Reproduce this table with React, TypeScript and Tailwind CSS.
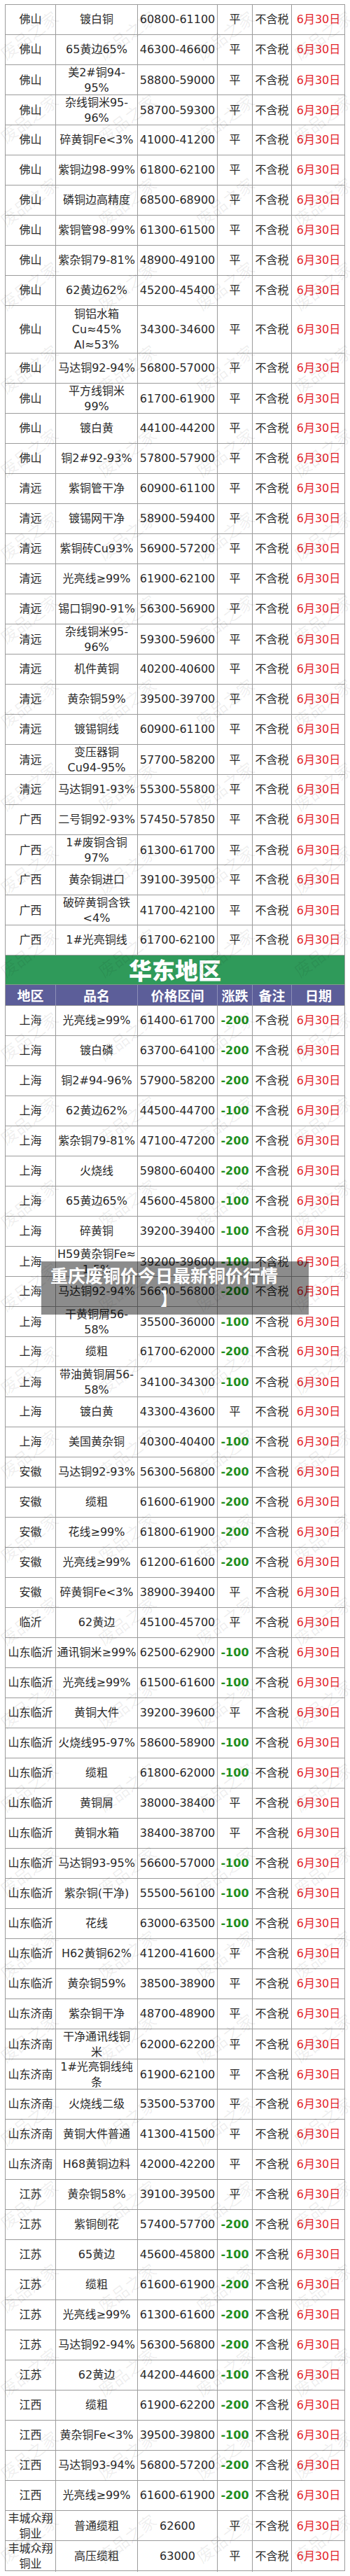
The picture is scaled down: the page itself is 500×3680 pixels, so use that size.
import React from "react";

type Row = [string, string, string, string];

const southRows: Row[] = [
  ["佛山", "镀白铜", "60800-61100", "平"],
  ["佛山", "65黄边65%", "46300-46600", "平"],
  ["佛山", "美2#铜94-|95%", "58800-59000", "平"],
  ["佛山", "杂线铜米95-|96%", "58700-59300", "平"],
  ["佛山", "碎黄铜Fe<3%", "41000-41200", "平"],
  ["佛山", "紫铜边98-99%", "61800-62100", "平"],
  ["佛山", "磷铜边高精度", "68500-68900", "平"],
  ["佛山", "紫铜管98-99%", "61300-61500", "平"],
  ["佛山", "紫杂铜79-81%", "48900-49100", "平"],
  ["佛山", "62黄边62%", "45200-45400", "平"],
  ["佛山", "铜铝水箱|Cu≈45%|Al≈53%", "34300-34600", "平"],
  ["佛山", "马达铜92-94%", "56800-57000", "平"],
  ["佛山", "平方线铜米|99%", "61700-61900", "平"],
  ["佛山", "镀白黄", "44100-44200", "平"],
  ["佛山", "铜2#92-93%", "57800-57900", "平"],
  ["清远", "紫铜管干净", "60900-61100", "平"],
  ["清远", "镀锡网干净", "58900-59400", "平"],
  ["清远", "紫铜砖Cu93%", "56900-57200", "平"],
  ["清远", "光亮线≥99%", "61900-62100", "平"],
  ["清远", "锡口铜90-91%", "56300-56900", "平"],
  ["清远", "杂线铜米95-|96%", "59300-59600", "平"],
  ["清远", "机件黄铜", "40200-40600", "平"],
  ["清远", "黄杂铜59%", "39500-39700", "平"],
  ["清远", "镀锡铜线", "60900-61100", "平"],
  ["清远", "变压器铜|Cu94-95%", "57700-58200", "平"],
  ["清远", "马达铜91-93%", "55300-55800", "平"],
  ["广西", "二号铜92-93%", "57450-57850", "平"],
  ["广西", "1#废铜含铜|97%", "61300-61700", "平"],
  ["广西", "黄杂铜进口", "39100-39500", "平"],
  ["广西", "破碎黄铜含铁|<4%", "41700-42100", "平"],
  ["广西", "1#光亮铜线", "61700-62100", "平"],
];

const eastRows: Row[] = [
  ["上海", "光亮线≥99%", "61400-61700", "-200"],
  ["上海", "镀白磷", "63700-64100", "-200"],
  ["上海", "铜2#94-96%", "57900-58200", "-200"],
  ["上海", "62黄边62%", "44500-44700", "-100"],
  ["上海", "紫杂铜79-81%", "47100-47200", "-200"],
  ["上海", "火烧线", "59800-60400", "-200"],
  ["上海", "65黄边65%", "45600-45800", "-100"],
  ["上海", "碎黄铜", "39200-39400", "-100"],
  ["上海", "H59黄杂铜Fe≈|1.5%", "39200-39600", "-100"],
  ["上海", "马达铜92-94%", "56600-56800", "-200"],
  ["上海", "干黄铜屑56-|58%", "35500-36000", "-100"],
  ["上海", "缆粗", "61700-62000", "-200"],
  ["上海", "带油黄铜屑56-|58%", "34100-34300", "-100"],
  ["上海", "镀白黄", "43300-43600", "平"],
  ["上海", "美国黄杂铜", "40300-40400", "-100"],
  ["安徽", "马达铜92-93%", "56300-56800", "-200"],
  ["安徽", "缆粗", "61600-61900", "-200"],
  ["安徽", "花线≥99%", "61800-61900", "-200"],
  ["安徽", "光亮线≥99%", "61200-61600", "-200"],
  ["安徽", "碎黄铜Fe<3%", "38900-39400", "平"],
  ["临沂", "62黄边", "45100-45700", "平"],
  ["山东临沂", "通讯铜米≥99%", "62500-62900", "-100"],
  ["山东临沂", "光亮线≥99%", "61500-61600", "-100"],
  ["山东临沂", "黄铜大件", "39200-39600", "平"],
  ["山东临沂", "火烧线95-97%", "58600-58900", "-100"],
  ["山东临沂", "缆粗", "61800-62000", "-100"],
  ["山东临沂", "黄铜屑", "38000-38400", "平"],
  ["山东临沂", "黄铜水箱", "38400-38700", "平"],
  ["山东临沂", "马达铜93-95%", "56600-57000", "-100"],
  ["山东临沂", "紫杂铜(干净)", "55500-56100", "-100"],
  ["山东临沂", "花线", "63000-63500", "-100"],
  ["山东临沂", "H62黄铜62%", "41200-41600", "平"],
  ["山东临沂", "黄杂铜59%", "38500-38900", "平"],
  ["山东济南", "紫杂铜干净", "48700-48900", "平"],
  ["山东济南", "干净通讯线铜|米", "62000-62200", "平"],
  ["山东济南", "1#光亮铜线纯|条", "61900-62100", "平"],
  ["山东济南", "火烧线二级", "53500-53700", "平"],
  ["山东济南", "黄铜大件普通", "41300-41500", "平"],
  ["山东济南", "H68黄铜边料", "42000-42200", "平"],
  ["江苏", "黄杂铜58%", "39100-39500", "平"],
  ["江苏", "紫铜刨花", "57400-57700", "-200"],
  ["江苏", "65黄边", "45600-45800", "-100"],
  ["江苏", "缆粗", "61600-61900", "-200"],
  ["江苏", "光亮线≥99%", "61300-61600", "-200"],
  ["江苏", "马达铜92-94%", "56300-56800", "-200"],
  ["江苏", "62黄边", "44200-44600", "-100"],
  ["江西", "缆粗", "61900-62200", "-200"],
  ["江西", "黄杂铜Fe<3%", "39500-39800", "-100"],
  ["江西", "马达铜93-94%", "56800-57200", "-200"],
  ["江西", "光亮线≥99%", "61600-61900", "-200"],
  ["丰城众翔|铜业", "普通缆粗", "62600", "平"],
  ["丰城众翔|铜业", "高压缆粗", "63000", "平"],
];

const cols = "grid grid-cols-[72px_117px_114px_50px_56px_76px]";
const cell = "flex flex-col items-center justify-center border-r border-[#9c9c9c] text-center whitespace-nowrap leading-[22px]";

function Lines({ text }: { text: string }) {
  return (
    <>
      {text.split("|").map((line, i) => (
        <div key={i}>{line}</div>
      ))}
    </>
  );
}

function PriceRow({ row }: { row: Row }) {
  const [region, name, price, change] = row;
  const tall = name.split("|").length > 2;
  const flat = change === "平";
  return (
    <div className={`${cols} border-b border-[#9c9c9c] ${tall ? "h-[68px]" : "h-[43px]"}`}>
      <div className={cell}>
        <Lines text={region} />
      </div>
      <div className={cell}>
        <Lines text={name} />
      </div>
      <div className={cell}>{price}</div>
      <div className={`${cell} ${flat ? "" : "font-bold text-[#1f8f1f]"}`}>{change}</div>
      <div className={cell}>不含税</div>
      <div className={`${cell} border-r-0 text-[#e3262c]`}>6月30日</div>
    </div>
  );
}

const headers = ["地区", "品名", "价格区间", "涨跌", "备注", "日期"];

export default function App() {
  const marks: { x: number; y: number }[] = [];
  for (let k = 0; k < 31; k++) {
    for (const x of [41, 181, 321, 461]) marks.push({ x, y: 50 + 119.2 * k });
  }

  return (
    <div className="relative w-[500px] overflow-hidden bg-white pt-[6px] pb-[8px] font-['DejaVu_Sans','Noto_Sans_CJK_SC',sans-serif] text-[16px] text-[#2a2a2a]">
      <div className="mx-[7px] border-t border-l border-r border-[#9c9c9c]">
        {southRows.map((r, i) => (
          <PriceRow key={i} row={r} />
        ))}

        <div className="flex h-[42px] items-center justify-center border-b border-[#7f9f86] bg-[#2f9a5a] font-['Noto_Sans_CJK_SC',sans-serif] text-[33px] font-black leading-none tracking-[0px] text-white">
          华东地区
        </div>

        <div className={`${cols} h-[30px] border-b border-[#9c9c9c] bg-[#5c5e99] font-['Noto_Sans_CJK_SC',sans-serif] text-[19px] font-bold text-white`}>
          {headers.map((h, i) => (
            <div
              key={h}
              className={`flex items-center justify-center whitespace-nowrap leading-none ${i < 5 ? "border-r border-[#8d8fb8]" : ""}`}
            >
              {h}
            </div>
          ))}
        </div>

        {eastRows.map((r, i) => (
          <PriceRow key={i} row={r} />
        ))}
      </div>

      {/* watermark */}
      <div className="pointer-events-none absolute inset-0 z-10 font-['Noto_Sans_CJK_SC',sans-serif]">
        {marks.map((m, i) => (
          <span
            key={i}
            className="absolute -translate-x-1/2 -translate-y-1/2 -rotate-[37deg] whitespace-nowrap text-[24px] text-black/[0.07]"
            style={{ left: m.x, top: m.y }}
          >
            废品之家
          </span>
        ))}
      </div>

      {/* title overlay */}
      <div className="absolute left-[59px] top-[1802px] z-20 h-[76px] w-[382px] bg-black/45 pt-[3px] font-['Noto_Sans_CJK_SC',sans-serif] text-[25px] font-bold leading-[33px] text-white">
        <div className="pl-[13px] whitespace-nowrap">重庆废铜价今日最新铜价行情</div>
        <div className="pl-[170px]">】</div>
      </div>
    </div>
  );
}
